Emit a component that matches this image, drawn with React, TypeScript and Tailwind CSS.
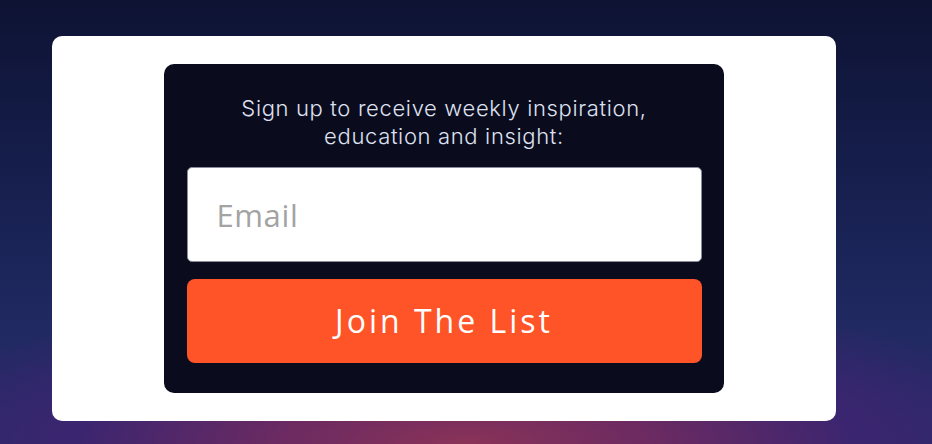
export default function App() {
  return (
    <div className="relative h-[444px] w-[932px] overflow-hidden bg-[linear-gradient(180deg,#0e1333_0%,#151d4a_35%,#1f2960_70%,#2a2a6a_100%)]">
      <div className="pointer-events-none absolute left-[466px] top-[444px] h-[300px] w-[1100px] -translate-x-1/2 -translate-y-1/2 rounded-full bg-[radial-gradient(ellipse_at_center,#8a3358_0%,#6a2a62_25%,#3b2570_50%,rgba(40,40,100,0)_75%)]" />
      <div className="relative pt-[36px] pl-[52px]">
        <div className="flex h-[385px] w-[784px] justify-center rounded-[10px] bg-white pt-[28px]">
          <div className="flex h-[329px] w-[560px] flex-col items-center rounded-[10px] bg-[#0a0c1e] px-[22px] pt-[30px] font-['Inter',sans-serif]">
            <p className="text-center text-[22px] font-light leading-[28px] tracking-[0.65px] text-[#dfe1f1]">
              Sign up to receive weekly inspiration,
              <br />
              education and insight:
            </p>
            <input
              type="email"
              placeholder="Email"
              className="mt-[17px] h-[95px] w-[515px] rounded-[5px] border border-[#8a8d99] bg-white pl-[29px] font-['Open_Sans',sans-serif] text-[31px] tracking-[0.6px] text-[#333] outline-none placeholder:text-[#a3a3a3]"
            />
            <button className="mt-[17px] h-[84px] w-[515px] rounded-[8px] bg-[#ff5328] font-['Open_Sans',sans-serif] text-[32px] tracking-[3px] text-white">
              Join The List
            </button>
          </div>
        </div>
      </div>
    </div>
  );
}
